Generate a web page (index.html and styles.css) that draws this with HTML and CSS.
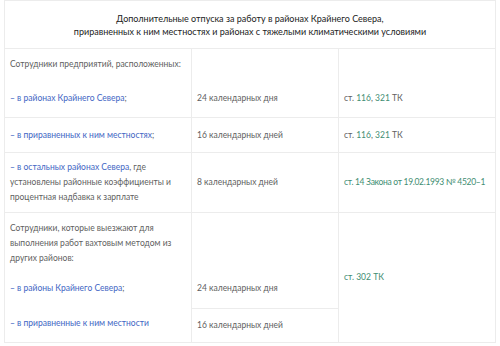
FILE: index.html
```html
<!DOCTYPE html>
<html lang="ru">
<head>
<meta charset="utf-8">
<title>Дополнительные отпуска</title>
<link rel="stylesheet" href="styles.css">
</head>
<body>
<div class="page">
  <div class="table">
    <div class="cell head"><p>Дополнительные отпуска за работу в районах Крайнего Севера,<br>приравненных к ним местностях и районах с тяжелыми климатическими условиями</p></div>

    <div class="cell c1 r1 g1">
      <p>Сотрудники предприятий, расположенных:</p>
      <p class="gap19"><a class="lnk">– в районах Крайнего Севера</a>;</p>
    </div>
    <div class="cell c2 r1 bottom b1"><p>24 календарных дня</p></div>
    <div class="cell c3 r1 bottom b1"><p>ст. <a class="law">116</a>, <a class="law">321</a> ТК</p></div>

    <div class="cell c1 r2 mid"><p><a class="lnk">– в приравненных к ним местностях</a>;</p></div>
    <div class="cell c2 r2 mid"><p>16 календарных дней</p></div>
    <div class="cell c3 r2 mid"><p>ст. <a class="law">116</a>, <a class="law">321</a> ТК</p></div>

    <div class="cell c1 r3 mid"><p><a class="lnk">– в остальных районах Севера</a>, где установлены районные коэффициенты и процентная надбавка к зарплате</p></div>
    <div class="cell c2 r3 mid"><p>8 календарных дней</p></div>
    <div class="cell c3 r3 mid"><p class="nowrap"><a class="law">ст. 14 Закона от 19.02.1993 № 4520–1</a></p></div>

    <div class="cell c1 r45 g2">
      <p>Сотрудники, которые выезжают для выполнения работ вахтовым методом из других районов:</p>
      <p class="gap15"><a class="lnk">– в районы Крайнего Севера</a>;</p>
      <p class="gap20"><a class="lnk">– в приравненные к ним местности</a></p>
    </div>
    <div class="cell c2 r4 bottom b4"><p>24 календарных дня</p></div>
    <div class="cell c3 r45 mid"><p><a class="law">ст. 302 ТК</a></p></div>
    <div class="cell c2 r5 mid"><p>16 календарных дней</p></div>
  </div>
</div>
</body>
</html>
```

FILE: styles.css
```css
html, body {
  margin: 0;
  padding: 0;
  background: #fff;
}

.page {
  padding: 0 4px;
  font-family: "Lato", "Liberation Sans", sans-serif;
  font-size: 8.5px;
  line-height: 15px;
  color: #5f5f5f;
}

.table {
  display: grid;
  grid-template-columns: 186px 146px 156px;
  grid-template-rows: 47px 68px 34px 59px 95px 33px;
  gap: 1px;
  padding: 1px;
  background: #ececec;
  width: 492px;
  box-sizing: border-box;
}

.cell {
  background: #fff;
  padding: 0 5px;
  display: flex;
  flex-direction: column;
}

.cell p {
  margin: 0;
}

.c1 { grid-column: 1; }
.c2 { grid-column: 2; }
.c3 { grid-column: 3; }
.r1 { grid-row: 2; }
.r2 { grid-row: 3; }
.r3 { grid-row: 4; }
.r4 { grid-row: 5; }
.r5 { grid-row: 6; }
.r45 { grid-row: 5 / 7; }

.head {
  grid-column: 1 / 4;
  grid-row: 1;
  justify-content: center;
  text-align: center;
  color: #222;
  font-size: 9px;
  line-height: 13px;
}

.mid {
  justify-content: center;
}

.bottom {
  justify-content: flex-end;
}

.b1 {
  padding-bottom: 11px;
}

.b4 {
  padding-bottom: 12px;
}

.g1 {
  padding-top: 8px;
}

.g2 {
  padding-top: 8px;
}

.cell .gap19 {
  margin-top: 19px;
}

.cell .gap15 {
  margin-top: 15px;
}

.cell .gap20 {
  margin-top: 20px;
}

.nowrap {
  white-space: nowrap;
  letter-spacing: -0.3px;
}

.lnk {
  color: #4266c4;
  text-decoration: none;
}

.law {
  color: #3f8e73;
  text-decoration: none;
}
```
